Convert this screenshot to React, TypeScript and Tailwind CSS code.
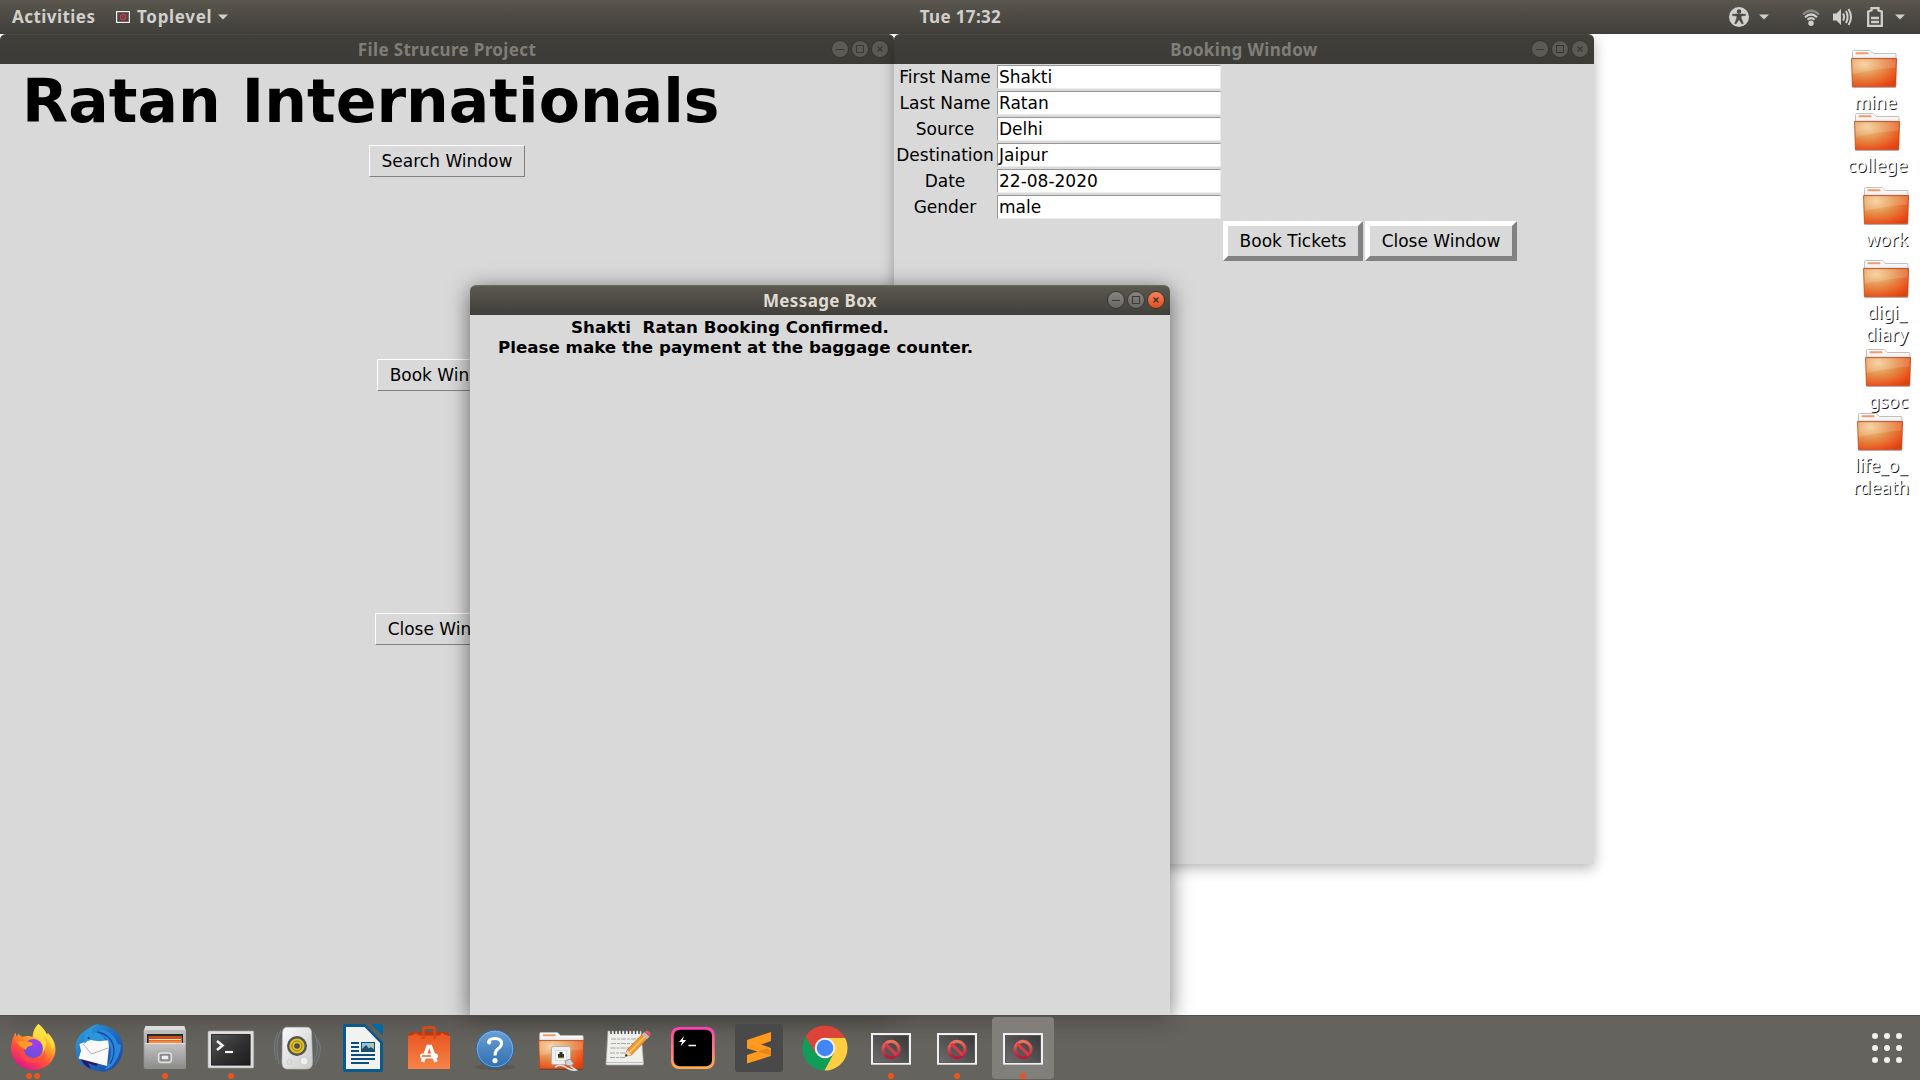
import React from "react";

const ubuntu = "font-['Noto_Sans','Open_Sans',sans-serif]";

function Gradients() {
  return (
    <svg width="0" height="0" className="absolute">
      <defs>
        <radialGradient id="folderFront" cx="0.28" cy="0.2" r="0.95">
          <stop offset="0" stopColor="#f5ce96" />
          <stop offset="0.45" stopColor="#e58f4a" />
          <stop offset="0.85" stopColor="#ea4f1a" />
          <stop offset="1" stopColor="#d8430f" />
        </radialGradient>
        <linearGradient id="folderBack" x1="0" y1="0" x2="0" y2="1">
          <stop offset="0" stopColor="#ffffff" />
          <stop offset="0.5" stopColor="#f4f4f4" />
          <stop offset="0.75" stopColor="#d0d0d0" />
        </linearGradient>
        <linearGradient id="metal" x1="0" y1="0" x2="0" y2="1">
          <stop offset="0" stopColor="#c4c4c4" />
          <stop offset="1" stopColor="#8d8d8d" />
        </linearGradient>
        <linearGradient id="screen" x1="0" y1="0" x2="1" y2="1">
          <stop offset="0" stopColor="#555" />
          <stop offset="0.5" stopColor="#333" />
          <stop offset="1" stopColor="#1d1d1d" />
        </linearGradient>
        <linearGradient id="noScreen" x1="1" y1="0" x2="0" y2="1">
          <stop offset="0" stopColor="#383838" />
          <stop offset="1" stopColor="#6c6c6c" />
        </linearGradient>
        <linearGradient id="noRing" x1="0" y1="0" x2="0" y2="1">
          <stop offset="0" stopColor="#f0705a" />
          <stop offset="1" stopColor="#b8183a" />
        </linearGradient>
        <linearGradient id="foxBody" x1="0.85" y1="0.05" x2="0.3" y2="1">
          <stop offset="0" stopColor="#fff24a" />
          <stop offset="0.35" stopColor="#ffb028" />
          <stop offset="0.65" stopColor="#ff5236" />
          <stop offset="1" stopColor="#e3128c" />
        </linearGradient>
        <radialGradient id="foxGlobe" cx="0.6" cy="0.2" r="0.9">
          <stop offset="0" stopColor="#a63cf2" />
          <stop offset="1" stopColor="#5a55d8" />
        </radialGradient>
        <linearGradient id="bird" x1="0" y1="0" x2="1" y2="1">
          <stop offset="0" stopColor="#2ea7dc" />
          <stop offset="0.5" stopColor="#1c6cc4" />
          <stop offset="1" stopColor="#23439b" />
        </linearGradient>
        <linearGradient id="bag" x1="0" y1="0" x2="0" y2="1">
          <stop offset="0" stopColor="#e95420" />
          <stop offset="1" stopColor="#f5854a" />
        </linearGradient>
        <linearGradient id="help" x1="0" y1="0" x2="0" y2="1">
          <stop offset="0" stopColor="#6ba0d6" />
          <stop offset="1" stopColor="#2f6eb0" />
        </linearGradient>
        <linearGradient id="hyper" x1="0" y1="0" x2="0" y2="1">
          <stop offset="0" stopColor="#ff3fb4" />
          <stop offset="1" stopColor="#ffae4c" />
        </linearGradient>
        <linearGradient id="speaker" x1="0" y1="0" x2="1" y2="1">
          <stop offset="0" stopColor="#fafafa" />
          <stop offset="1" stopColor="#c9c9c9" />
        </linearGradient>
      </defs>
    </svg>
  );
}

function FolderShape() {
  return (
    <>
      <path d="M1.5 12V1.8Q1.5.8 2.500.5H18.500Q19.700.5 20.500 1.600L22.300 3.500H44Q45 3.500 45 4.500V12Z" fill="url(#folderBack)" stroke="#b9b9b9" strokeWidth="0.9" />
      <rect x="4.500" y="2.200" width="13" height="2" rx="0.6" fill="#f19a67" />
      <path d="M.5 8.500H45.600L44.700 36.800H1.400Z" fill="url(#folderFront)" stroke="#b9421a" strokeOpacity="0.75" strokeWidth="1" />
      <path d="M1.400 9.500H44.700L44.400 17.500Q22 19 1.700 24Z" fill="#fff" fillOpacity="0.15" />
      <path d="M1.500 37.500H44.700" stroke="#000" strokeOpacity="0.2" strokeWidth="1" />
    </>
  );
}

function FolderIcon() {
  return (
    <svg width="46" height="38" viewBox="0 0 46 38" className="block shrink-0">
      <FolderShape />
    </svg>
  );
}

function Firefox() {
  return (
    <>
      <path d="M29.500 0C33 3 36 6 37.500 10C38.500 11 38.800 10 38.800 9C44 14 46.700 20 46.500 25.500C46 38 36 46 24.500 46C12 46 2 36.500 2 24.500C2 18 4 13 6.500 8.500L7.800 13L9.500 9.800C10.500 11.500 12 13 14 12.700C17 12 20 11.500 23.500 13C24 7.500 25.500 3.500 29.500 0Z" fill="url(#foxBody)" />
      <path d="M29.500 0C26 4 24 8 24.500 13C31 15 35 20 33 28C39 24 38 15 32 11Q42 15 43 27Q48 19 38.800 9Q38.700 11 37.500 10C36 6 33 3 29.500 0Z" fill="#ffe647" fillOpacity="0.75" />
      <circle cx="24.300" cy="24.500" r="9.600" fill="url(#foxGlobe)" />
      <path d="M8 18C12 16.500 18 17 22.500 18.500C24.500 19.500 24 21.500 21 22C18 22.500 17.500 24 17 26C14.500 24.500 11 23 7.500 18Z" fill="#ff9a22" />
      <path d="M15 25Q15 34 24 35Q33 36 36 26Q38 38 25 39Q12 39 11 26Z" fill="#ff4b48" fillOpacity="0.65" />
    </>
  );
}

function Thunderbird() {
  return (
    <>
      <path d="M22 0L15.500 4C7 7 0 14 0.500 26C1 38 9 44 18 46L29 48L37 45C45 39 48 32 48 24C48 11 38 2 25 1Z" fill="url(#bird)" />
      <path d="M4 31Q7 41 16 45L13 39L21 42L25 38L8 31Z" fill="#2b1a5c" />
      <path d="M24 4Q38 7 43 20L46 21Q45 34 36 43L30 46L34 38Q40 22 28 12Z" fill="#2a86da" />
      <path d="M22 8Q34 10 38 20Q41 30 35 40" fill="none" stroke="#174a9e" strokeWidth="1.300" />
      <path d="M4.500 20L15 16L33 16.500L34 22L32 42L3.500 34.500L6 27Z" fill="#fafafa" />
      <path d="M8 20L16.500 30L33 24" fill="none" stroke="#b0b0b0" strokeWidth="1" />
      <path d="M19 1Q9 6 9.500 13Q8.500 17 9.500 20Q13 14.500 19 16.500Q27 18 30 16Q25 6 16 9Q17 4 22 1Z" fill="#2c96dc" />
      <circle cx="13.600" cy="14" r="1" fill="#142b52" />
    </>
  );
}

function Files() {
  return (
    <>
      <path d="M4.500 2H43.200L45 6.500V43Q45 45 43 45H5Q2.700 45 2.700 43V6.500Z" fill="url(#metal)" />
      <path d="M4.500 2H43.200L44.300 6H3.500Z" fill="#dcdcdc" />
      <rect x="6" y="10" width="36" height="9" fill="#292929" />
      <path d="M7.500 19V12.500Q7.500 12 8.500 12H40Q41 12 41 13V19Z" fill="#c9501a" />
      <path d="M8 16.500H41V19H8Z" fill="#f08a47" />
      <path d="M8 15.500H40" stroke="#ffd9bc" strokeWidth="1" />
      <rect x="4" y="19" width="40" height="25" rx="1" fill="url(#metal)" />
      <path d="M4 19.500H44" stroke="#e4e4e4" />
      <rect x="17.500" y="29" width="13" height="9.500" rx="2.500" fill="#b1b1b1" stroke="#dedede" strokeWidth="1.300" />
      <rect x="20" y="31" width="8" height="5" fill="#ececec" stroke="#5f5f5f" />
    </>
  );
}

function Terminal() {
  return (
    <>
      <rect x="1" y="7" width="45.700" height="37" rx="1" fill="#dedede" stroke="#a5a5a5" strokeWidth="0.600" />
      <rect x="4.600" y="10.600" width="38.500" height="30.500" fill="url(#screen)" stroke="#111" strokeWidth="0.800" />
      <path d="M10 17L15.500 21.500L10 26" fill="none" stroke="#f2f2f2" strokeWidth="2.600" />
      <path d="M18 28H26" stroke="#f2f2f2" strokeWidth="2.200" />
    </>
  );
}

function Rhythmbox() {
  return (
    <>
      <path d="M5 8Q-1 20 3 36M8 6Q1 20 6 40M41 8Q48 22 41 38M43 14Q52 24 42 41" fill="none" stroke="#7d9bbd" strokeOpacity="0.4" strokeWidth="1.200" />
      <path d="M14 3.300H34Q38 3.500 38.500 8L39.500 38Q39.500 45 34 45H14Q9 45 9 38L9.500 8Q10 3.500 14 3.300Z" fill="url(#speaker)" stroke="#bbb" strokeWidth="0.600" />
      <circle cx="24" cy="22" r="10" fill="#55554f" />
      <circle cx="24" cy="22" r="7.600" fill="#e0bf2a" />
      <circle cx="24" cy="22" r="5" fill="none" stroke="#9c8112" strokeWidth="1" />
      <circle cx="24" cy="22" r="2.800" fill="#4d4d4d" />
      <circle cx="31" cy="37" r="4" fill="#eee" stroke="#c3c3c3" strokeWidth="0.700" />
      <circle cx="16.500" cy="38" r="2.300" fill="none" stroke="#ccc" />
    </>
  );
}

function Writer() {
  return (
    <>
      <path d="M6 0H26L44 18V46Q44 48 42 48H6Q4 48 4 46V2Q4 0 6 0Z" fill="#0b5a8c" />
      <path d="M32 0H42Q44 0 44 2V12Z" fill="#0369a3" />
      <path d="M7 3H25.500L41 19V45H7Z" fill="#f2f2f2" />
      <path d="M12 19H20M12 23H20M12 27H20M12 31H36M12 35H36M12 39H30" stroke="#0b5078" strokeWidth="1.900" />
      <rect x="22.500" y="18.500" width="13" height="9" fill="#8bc5e8" stroke="#0b5078" />
      <path d="M23 27V25L27 21L30 24.500L32 23L35 25.500V27Z" fill="#224f5c" />
      <circle cx="33" cy="20.700" r="1.500" fill="#f2c629" />
    </>
  );
}

function Software() {
  return (
    <>
      <path d="M3 12L6 8H42L45 12L42 14H6Z" fill="#b83a12" />
      <path d="M3 12L8 11L11 9L14 11.500H34L37 9L40 11L45 12V45H3Z" fill="url(#bag)" />
      <path d="M18.300 15V6Q18.300 3.500 21 3.500H27Q29.700 3.500 29.700 6V15" fill="none" stroke="#d74818" strokeWidth="2.800" />
      <path d="M17.500 37.800L23 22.500H25.500L31 37.800" fill="none" stroke="#fff" strokeWidth="3.600" />
      <rect x="15" y="29.500" width="18" height="5" rx="2.500" fill="#fff" />
      <path d="M17 32H26" stroke="#ee6b32" strokeWidth="1.600" />
    </>
  );
}

function Help() {
  return (
    <>
      <ellipse cx="24" cy="43" rx="20" ry="3" fill="#000" fillOpacity="0.120" />
      <circle cx="24" cy="25" r="18.900" fill="url(#help)" stroke="#2c619b" strokeWidth="0.900" />
      <circle cx="24" cy="25" r="17.700" fill="none" stroke="#8ab6e3" strokeWidth="0.700" />
      <path d="M17.500 19Q17.500 14.500 24 14.500Q30.500 14.500 30.500 19.500Q30.500 22.500 27 24.800Q24 26.800 24 31.500" fill="none" stroke="#fff" strokeWidth="3" />
      <circle cx="18.200" cy="18.500" r="2" fill="#fff" />
      <circle cx="24" cy="36.600" r="2.600" fill="#fff" />
    </>
  );
}

function NetworkFolder() {
  return (
    <>
      <g transform="translate(1.200 8)">
        <FolderShape />
      </g>
      <rect x="14.500" y="22.500" width="19" height="18" rx="1.800" fill="#eee" stroke="#b1b1b1" />
      <rect x="18.500" y="26.500" width="11" height="10" fill="#fafafa" stroke="#c8c8c8" strokeWidth="0.600" />
      <path d="M21 34V30H22.500V28H25.500V30H27V34Z" fill="#333" />
      <path d="M21 34H27" stroke="#b6bf24" strokeWidth="0.900" />
      <path d="M18 43Q24 39 30 44Q35 47 39 46Q35 44 33 41" fill="none" stroke="#ddd" strokeWidth="1.600" />
      <path d="M28 37L33 35L37 40L33 42L29 41Z" fill="#d5d5d5" stroke="#888" strokeWidth="0.800" />
    </>
  );
}

function Notes() {
  return (
    <>
      <path d="M5 7H38L40.500 40Q40.500 41 39 41H4Q3 41 3 40Z" fill="#efefec" stroke="#aaa" strokeWidth="0.700" />
      <path d="M3 38.500H40.500" stroke="#bdbdbd" />
      <path d="M8 5.500V10M11.500 5.500V10M15 5.500V10M18.500 5.500V10M22 5.500V10M25.500 5.500V10M29 5.500V10M32.500 5.500V10M36 5.500V10" stroke="#494949" strokeWidth="1.500" />
      <path d="M8 15H36M8 19.500H35M7.500 24H28M7 29H24M7 33.500H22" stroke="#9f9f9f" strokeWidth="0.900" strokeDasharray="5 1 3 1" />
      <path d="M22 32.500L24 26L41 8.500L46 13L28.500 31Z" fill="#f39a2e" stroke="#b45f12" strokeWidth="0.600" />
      <path d="M26.500 28.500L43.500 10.700" stroke="#ffce7a" strokeWidth="1.400" />
      <path d="M22 32.500L24 26L28.500 31Z" fill="#f4d7ac" />
      <path d="M22 32.500L22.900 29.800L24.800 31.800Z" fill="#222" />
      <path d="M39 10.500L41.500 8L46.500 12.500L44 15Z" fill="#bdbdbd" />
      <path d="M41.500 8Q43.500 5.500 46.500 8Q49 10.500 46.500 12.500Z" fill="#e3555e" />
    </>
  );
}

function Hyper() {
  return (
    <>
      <rect x="2" y="3" width="43.700" height="42" rx="8" fill="url(#hyper)" />
      <rect x="4.700" y="5.700" width="38.300" height="36.600" rx="6" fill="#000" />
      <path d="M15 12L10 18H13L11.500 22.500L17.200 16H13.700Z" fill="#fff" />
      <path d="M19.500 21.500H27" stroke="#fff" strokeWidth="1.500" />
    </>
  );
}

function Sublime() {
  return (
    <>
      <rect width="48" height="48" rx="3" fill="#494949" />
      <path d="M12 16L36 8V17L26 20.500L36 24V32L12 39.500V31L22.500 27.500L12 24.500Z" fill="#ff9a1f" />
      <path d="M22.500 27.500L32 24.500L36 27V31.500Z" fill="#d97c12" fillOpacity="0.650" />
    </>
  );
}

function Chrome() {
  return (
    <>
      <path d="M24 24L4.500 12.700A22.500 22.500 0 0 0 24 46.500L33.700 29.600Z" fill="#0f9d58" />
      <path d="M24 13.700H44A22.500 22.500 0 0 1 23.500 46.500L33 29Z" fill="#ffcd40" />
      <path d="M4.500 12.700L14.500 29L24 13.700H44A22.500 22.500 0 0 0 4.500 12.700Z" fill="#db4437" />
      <circle cx="24" cy="24" r="10.300" fill="#f1f1f1" />
      <circle cx="24" cy="24" r="8.300" fill="#4285f4" />
    </>
  );
}

function MissingApp() {
  return (
    <>
      <rect x="4" y="9" width="40" height="32" fill="#f0f0f0" />
      <path d="M4 40.500H44" stroke="#c7c7c7" />
      <rect x="6.500" y="11.500" width="35" height="27" fill="url(#noScreen)" stroke="#4a4a4a" strokeWidth="0.800" />
      <circle cx="24" cy="25.500" r="8.100" fill="none" stroke="url(#noRing)" strokeWidth="3.200" />
      <path d="M18.300 19.800L29.700 31.200" stroke="#d93b49" strokeWidth="3.200" />
    </>
  );
}

const dock: { icon: React.FC; dots: number; active?: boolean }[] = [
  { icon: Firefox, dots: 2 },
  { icon: Thunderbird, dots: 0 },
  { icon: Files, dots: 1 },
  { icon: Terminal, dots: 1 },
  { icon: Rhythmbox, dots: 0 },
  { icon: Writer, dots: 0 },
  { icon: Software, dots: 0 },
  { icon: Help, dots: 0 },
  { icon: NetworkFolder, dots: 0 },
  { icon: Notes, dots: 0 },
  { icon: Hyper, dots: 0 },
  { icon: Sublime, dots: 0 },
  { icon: Chrome, dots: 0 },
  { icon: MissingApp, dots: 1 },
  { icon: MissingApp, dots: 1 },
  { icon: MissingApp, dots: 1, active: true },
];

function Dock() {
  return (
    <footer className="absolute inset-x-0 bottom-0 flex h-[65px] items-start justify-between overflow-hidden border-t border-[#51504b] bg-[#65635e]">
      <div className="absolute -top-10 left-0 h-10 w-[894px] shadow-[0_6px_26px_rgba(0,0,0,0.200)]" />
      <div className="absolute -top-10 left-[470px] h-10 w-[700px] shadow-[0_4px_22px_rgba(0,0,0,0.250)]" />
      <nav className="relative flex gap-1 pl-0.5 pt-px">
        {dock.map(({ icon: Icon, dots, active }, i) => (
          <div
            key={i}
            className={
              active
                ? "relative flex h-[62px] w-[62px] justify-center rounded-[4px] bg-[#807f7a] pt-[7px]"
                : "relative flex h-[62px] w-[62px] justify-center pt-[7px]"
            }
          >
            <svg width="48" height="48" viewBox="0 0 48 48" className="block overflow-visible">
              <Icon />
            </svg>
            <div className="absolute inset-x-0 top-[56px] flex justify-center gap-[2.500px]">
              {Array.from({ length: dots }, (_, d) => (
                <span key={d} className="size-1.5 rounded-full bg-[#e95420]" />
              ))}
            </div>
          </div>
        ))}
      </nav>
      <div className="mr-[18px] mt-[17px] grid grid-cols-3 gap-[6px]">
        {Array.from({ length: 9 }, (_, i) => (
          <span key={i} className="size-[6px] rounded-full bg-[#f0f0ee]" />
        ))}
      </div>
    </footer>
  );
}

function Caret() {
  return (
    <svg width="10" height="6" viewBox="0 0 10 6" className="block">
      <path d="M0 0.500H10L5 5.500Z" fill="#cfcfcb" />
    </svg>
  );
}

function TopBar() {
  return (
    <header className={`${ubuntu} absolute inset-x-0 top-0 grid h-[34px] grid-cols-3 items-center bg-linear-to-b from-[#5a564d] to-[#403f3a] text-[17px] font-bold tracking-[0.450px] text-[#d0cfcb]`}>
      <div className="flex items-center pl-3">
        <span className="w-[82px] whitespace-nowrap">Activities</span>
        <svg width="14" height="14" viewBox="0 0 14 14" className="ml-[22px]">
          <rect x="0.600" y="1.600" width="12.800" height="10.800" fill="#4a4644" stroke="#eee" strokeWidth="1.200" />
          <circle cx="7" cy="7" r="2.700" fill="none" stroke="#d23744" strokeWidth="1.300" />
          <path d="M5.300 5.300L8.700 8.700" stroke="#d23744" />
        </svg>
        <span className="ml-[7px] w-[77px] whitespace-nowrap tracking-[0.700px]">Toplevel</span>
        <span className="ml-1"><Caret /></span>
      </div>
      <div className="pl-px text-center tracking-[0.350px]">Tue 17:32</div>
      <div className="flex items-center justify-end pr-[14px]">
        <svg width="20" height="20" viewBox="0 0 20 20" className="mr-[10px]">
          <circle cx="10" cy="10" r="10" fill="#d0d0cd" />
          <circle cx="10" cy="4.500" r="2.200" fill="#4a4843" />
          <path d="M3.500 7.200L8 7H12L16.500 7.200V8.500L12.200 9V11L14.300 16.500L13 17L10 12.500L7 17L5.700 16.500L7.800 11V9L3.500 8.500Z" fill="#4a4843" stroke="#4a4843" strokeWidth="0.500" />
        </svg>
        <Caret />
        <svg width="18" height="17" viewBox="0 0 18 17" className="ml-[33px] mr-[13px]">
          <path d="M1 5.500Q9 -2 17 5.500" fill="none" stroke="#8c8a86" strokeWidth="2.200" />
          <path d="M3 8.200Q9 2.800 15 8.200M5.500 10.800Q9 7.600 12.500 10.800" fill="none" stroke="#d0d0cd" strokeWidth="2.200" />
          <circle cx="9" cy="14.200" r="2.700" fill="#d0d0cd" />
        </svg>
        <svg width="20" height="18" viewBox="0 0 20 18" className="mr-[14px]">
          <path d="M0 5.500H3.500L8 1V17L3.500 12.500H0Z" fill="#d0d0cd" />
          <path d="M10 5.500Q12 9 10 12.500M13 3Q16.200 9 13 15M15.500 1Q20.500 9 15.500 17" fill="none" stroke="#d0d0cd" strokeWidth="2" />
        </svg>
        <svg width="16" height="20" viewBox="0 0 16 20" className="mr-[12px]">
          <path d="M1.200 4.500L4.500 3.500V1.200H11.500V3.500L14.800 4.500V18.800H1.200Z" fill="none" stroke="#d0d0cd" strokeWidth="2.300" />
          <path d="M4 11H12M4 15H12" stroke="#d0d0cd" strokeWidth="2.400" />
        </svg>
        <span className="mr-px"><Caret /></span>
      </div>
    </header>
  );
}

function Control({ kind, focused }: { kind: "min" | "max" | "close"; focused?: boolean }) {
  const tone = !focused
    ? "border-[#37352f] bg-[#5c5a54] text-[#393834]"
    : kind === "close"
      ? "border-[#3a3833] bg-linear-to-b from-[#f5825b] to-[#e04f1c] text-[#3e2a20]"
      : "border-[#3a3833] bg-linear-to-b from-[#868580] to-[#676661] text-[#393834]";
  return (
    <span className={`${tone} flex size-[18px] items-center justify-center rounded-full border`}>
      <svg width="16" height="16" viewBox="0 0 16 16" fill="none" stroke="currentColor" className="block shrink-0">
        {kind === "min" && <path d="M4 8.500H12" />}
        {kind === "max" && <rect x="4.500" y="4.500" width="7" height="7" />}
        {kind === "close" && <path d="M5.500 5.500L10.500 10.500M10.500 5.500L5.500 10.500" strokeWidth="1.200" />}
      </svg>
    </span>
  );
}

function TitleBar({ title, focused }: { title: string; focused?: boolean }) {
  return (
    <div
      className={`${ubuntu} ${
        focused
          ? "from-[#5b5950] to-[#403f3a] text-[#dfdbd2] border-[#6a6c59]"
          : "from-[#403f3b] to-[#3c3b37] text-[#807d78] border-[#484742]"
      } grid h-[30px] grid-cols-[70px_1fr_70px] items-center rounded-t-[6px] border-t bg-linear-to-b text-[17px] font-bold`}
    >
      <span />
      <span className="text-center tracking-[0.350px]">{title}</span>
      <span className="-mt-px flex justify-end gap-[2px] pr-[5px]">
        <Control kind="min" focused={focused} />
        <Control kind="max" focused={focused} />
        <Control kind="close" focused={focused} />
      </span>
    </div>
  );
}

function FlatButton({ children }: { children: string }) {
  return (
    <button className="h-8 whitespace-nowrap border border-b-[#808080] border-l-white border-r-[#808080] border-t-white px-3 pt-px leading-[29px]">
      {children}
    </button>
  );
}

const fields: [string, string][] = [
  ["First Name", "Shakti"],
  ["Last Name", "Ratan"],
  ["Source", "Delhi"],
  ["Destination", "Jaipur"],
  ["Date", "22-08-2020"],
  ["Gender", "male"],
];

const raised = "h-10 border-[5px] border-b-[#828282] border-l-white border-r-[#828282] border-t-white pt-px leading-[29px]";

const folders: [string[], string, string][] = [
  [["mine"], "left-[1834px] top-[50px]", "pl-[3px]"],
  [["college"], "left-[1837px] top-[113px]", "pl-[1px]"],
  [["work"], "left-[1846px] top-[187px]", "pl-[2px]"],
  [["digi_", "diary"], "left-[1846px] top-[260px]", "pl-[2px]"],
  [["gsoc"], "left-[1848px] top-[349px]", "pl-[1px]"],
  [["life_o_", "rdeath"], "left-[1840px] top-[413px]", "pl-[2px]"],
];

export default function App() {
  return (
    <div className="relative h-[1080px] w-[1920px] overflow-hidden bg-white font-['DejaVu_Sans',sans-serif] text-[17px] text-black">
      <Gradients />

      {folders.map(([lines, place, nudge]) => (
        <div key={lines[0]} className={`${place} ${ubuntu} absolute flex w-20 flex-col items-center`}>
          <FolderIcon />
          <div className={`${nudge} mt-[3px] text-center text-[18px] leading-[22px] text-white [text-shadow:1px_1px_0_#1a1a1a]`}>
            {lines.map((l) => (
              <div key={l}>{l}</div>
            ))}
          </div>
        </div>
      ))}

      <section className="absolute left-0 top-[34px] h-[1000px] w-[894px] rounded-t-[6px] bg-[#d9d9d9]">
        <TitleBar title="File Strucure Project" />
        <h1 className="ml-[22px] mt-px h-[80px] whitespace-nowrap text-[60px] font-bold leading-[72px] tracking-[0.050px]">Ratan Internationals</h1>
        <div className="flex flex-col items-center">
          <FlatButton>Search Window</FlatButton>
          <div className="mt-[182px]"><FlatButton>Book Window</FlatButton></div>
          <div className="mt-[222px]"><FlatButton>Close Window</FlatButton></div>
        </div>
      </section>

      <section className="absolute left-[894px] top-[34px] h-[830px] w-[700px] rounded-t-[6px] bg-[#d9d9d9] shadow-[0_4px_14px_rgba(0,0,0,0.300)]">
        <TitleBar title="Booking Window" />
        <div className="grid grid-cols-[103px_226px_142px_154px]">
          {fields.map(([label, value]) => (
            <React.Fragment key={label}>
              <label className="col-start-1 h-[26px] pr-px text-center leading-[26px]">{label}</label>
              <div className="mt-px h-6 w-[224px] border border-b-[#ececec] border-l-[#969696] border-r-[#ececec] border-t-[#969696] bg-white pl-px leading-[22px]">
                {value}
              </div>
            </React.Fragment>
          ))}
          <button className={`${raised} col-start-3 row-start-7 mt-px w-[140px]`}>Book Tickets</button>
          <button className={`${raised} col-start-4 row-start-7 mt-px w-[152px]`}>Close Window</button>
        </div>
      </section>

      <section className="absolute left-[470px] top-[285px] h-[730px] w-[700px] rounded-t-[6px] bg-[#d9d9d9] shadow-[0_4px_22px_rgba(0,0,0,0.550)]">
        <TitleBar title="Message Box" focused />
        <div className="flex w-[520px] flex-col items-center pt-[2px] text-[16.700px] font-bold leading-[20px]">
          <p className="whitespace-pre">{"Shakti  Ratan Booking Confirmed."}</p>
          <p className="ml-[11px] whitespace-nowrap">Please make the payment at the baggage counter.</p>
        </div>
      </section>

      <TopBar />
      <Dock />
    </div>
  );
}
